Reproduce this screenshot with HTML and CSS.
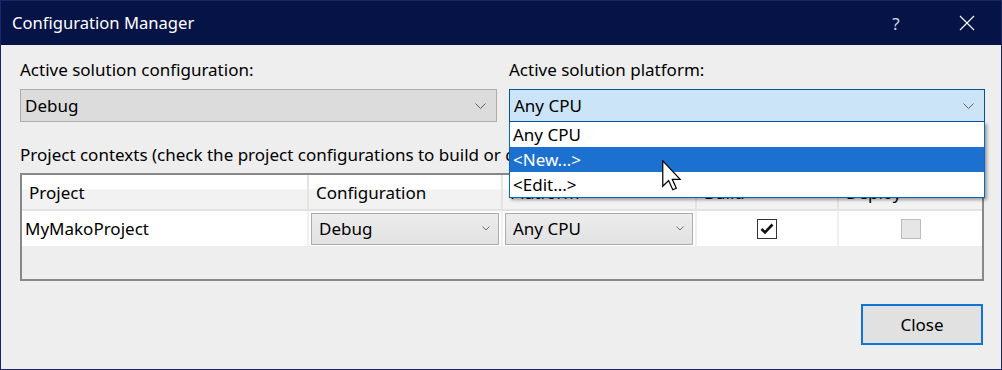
FILE: index.html
```html
<!DOCTYPE html>
<html lang="en">
<head>
    <meta charset="UTF-8">
    <title>Configuration Manager</title>
    <link rel="stylesheet" href="styles.css">
</head>
<body>
    <div class="window">
        <div class="titlebar">
            <span class="title">Configuration Manager</span>
            <span class="title-btn help">?</span>
            <span class="title-btn close-x">
                <svg width="16" height="16" viewBox="0 0 16 16"><path d="M1 1 L15 15 M15 1 L1 15" stroke="#fff" stroke-width="1.1" fill="none"/></svg>
            </span>
        </div>
        <div class="content">
            <div class="top-row">
                <div class="field">
                    <label>Active solution configuration:</label>
                    <div class="combo">
                        <span>Debug</span>
                        <svg class="chevron" width="11" height="6" viewBox="0 0 11 6"><path d="M0.5 0.5 L5.5 5.5 L10.5 0.5" stroke="#606060" fill="none"/></svg>
                    </div>
                </div>
                <div class="field platform-field">
                    <label>Active solution platform:</label>
                    <div class="combo combo-open">
                        <span>Any CPU</span>
                        <svg class="chevron" width="11" height="6" viewBox="0 0 11 6"><path d="M0.5 0.5 L5.5 5.5 L10.5 0.5" stroke="#606060" fill="none"/></svg>
                    </div>
                    <ul class="dropdown">
                        <li>Any CPU</li>
                        <li class="selected">&lt;New...&gt;</li>
                        <li>&lt;Edit...&gt;</li>
                    </ul>
                </div>
            </div>

            <div class="contexts-label">Project contexts (check the project configurations to build or deploy):</div>

            <div class="grid">
                <div class="grid-row header">
                    <div class="cell c-project">Project</div>
                    <div class="cell c-config">Configuration</div>
                    <div class="cell c-platform">Platform</div>
                    <div class="cell c-build">Build</div>
                    <div class="cell c-deploy">Deploy</div>
                </div>
                <div class="grid-row">
                    <div class="cell c-project">MyMakoProject</div>
                    <div class="cell c-config">
                        <div class="small-combo">
                            <span>Debug</span>
                            <svg width="8" height="5" viewBox="0 0 8 5"><path d="M0.5 0.5 L4 4 L7.5 0.5" stroke="#707070" fill="none"/></svg>
                        </div>
                    </div>
                    <div class="cell c-platform">
                        <div class="small-combo">
                            <span>Any CPU</span>
                            <svg width="8" height="5" viewBox="0 0 8 5"><path d="M0.5 0.5 L4 4 L7.5 0.5" stroke="#707070" fill="none"/></svg>
                        </div>
                    </div>
                    <div class="cell c-build">
                        <span class="checkbox">
                            <svg width="14" height="12" viewBox="0 0 14 12"><path d="M1.5 6 L5 9.5 L12.5 1.5" stroke="#111" stroke-width="2.6" fill="none"/></svg>
                        </span>
                    </div>
                    <div class="cell c-deploy">
                        <span class="checkbox disabled"></span>
                    </div>
                </div>
            </div>

            <div class="footer">
                <button class="btn">Close</button>
            </div>
        </div>

        <svg class="cursor" width="20" height="31" viewBox="0 0 13 20">
            <path d="M0.5 0.5 L0.5 17 L4.3 13.3 L7 19.3 L9.3 18.3 L6.7 12.5 L11.8 12.5 Z" fill="#fff" stroke="#000" stroke-width="0.8" stroke-linejoin="miter"/>
        </svg>
    </div>
</body>
</html>
```

FILE: styles.css
```css
html, body {
    margin: 0;
    padding: 0;
    background: #eeeeee;
}
body {
    font-family: 'Noto Sans', 'Open Sans', sans-serif;
    font-size: 17px;
    color: #000;
}
.window {
    position: relative;
    width: 1002px;
    height: 370px;
    box-sizing: border-box;
    border: 1px solid #1d2566;
    background-color: #eeeeee;
    overflow: hidden;
}
.titlebar {
    display: flex;
    align-items: center;
    height: 44px;
    background-color: #061347;
    color: #fff;
    padding: 0 0 0 11px;
}
.title {
    flex: 1;
    font-size: 16.6px;
    margin-top: -1px;
}
.title-btn {
    display: flex;
    align-items: center;
    justify-content: center;
    color: #d8d8e8;
}
.help {
    width: 16px;
    margin-right: 55px;
    font-size: 17px;
}
.close-x {
    width: 16px;
    margin-right: 26px;
}
.content {
    padding: 14px 17px 0 19px;
}
.top-row {
    display: grid;
    grid-template-columns: 477px 476px;
    column-gap: 12px;
}
.field {
    position: relative;
}
.field label {
    display: block;
    line-height: 22px;
    margin-bottom: 8px;
}
.combo {
    display: flex;
    align-items: center;
    height: 31px;
    border: 1px solid #adadad;
    background-color: #dcdcdc;
    padding: 0 10px 0 4px;
}
.combo span {
    flex: 1;
}
.combo-open {
    background-color: #cce4f7;
    border-color: #005499;
}
.chevron {
    margin-top: 1px;
}
.dropdown {
    position: absolute;
    top: 63px;
    left: 0;
    right: 0;
    margin: 0;
    padding: 0;
    list-style: none;
    background-color: #fff;
    border: 1px solid #0a64c2;
    border-top: none;
    box-shadow: 2px 2px 3px rgba(0, 0, 0, 0.35);
    z-index: 5;
}
.dropdown li {
    height: 25px;
    line-height: 25px;
    padding-left: 3px;
}
.dropdown li.selected {
    background-color: #1c71d0;
    color: #fff;
}
.contexts-label {
    margin-top: 22px;
    line-height: 22px;
    height: 29px;
}
.grid {
    height: 104px;
    border: 2px solid #888;
    background-color: #eeeeee;
}
.grid-row {
    display: flex;
    height: 35px;
    background-color: #fff;
}
.grid-row.header {
    height: 34px;
    background: linear-gradient(to bottom, #ffffff 0%, #ffffff 40%, #f2f2f2 45%, #f2f2f2 100%);
    border-bottom: 2px solid #e2e2e2;
}
.cell {
    display: flex;
    align-items: center;
    box-sizing: border-box;
    border-right: 2px solid #f0f0f0;
}
.header .cell {
    border-right: 2px solid #e4e4e4;
    padding-left: 7px;
}
.c-project {
    width: 287px;
    padding-left: 3px;
}
.c-config {
    width: 194px;
    padding-left: 2px;
}
.c-platform {
    width: 194px;
    padding-left: 2px;
}
.c-build {
    width: 142px;
    justify-content: center;
}
.c-deploy {
    flex: 1;
    justify-content: center;
    border-right: none;
}
.header .c-build,
.header .c-deploy {
    justify-content: flex-start;
}
.header .c-deploy {
    border-right: none;
}
.small-combo {
    display: flex;
    align-items: center;
    width: 188px;
    height: 32px;
    box-sizing: border-box;
    border: 1px solid #acacac;
    background: linear-gradient(to bottom, #ececec, #e2e2e2);
    padding: 0 8px 0 7px;
}
.small-combo span {
    flex: 1;
}
.checkbox {
    display: flex;
    align-items: center;
    justify-content: center;
    width: 20px;
    height: 20px;
    box-sizing: border-box;
    border: 1px solid #333;
    background-color: #fff;
}
.checkbox.disabled {
    border-color: #bcbcbc;
    background-color: #e6e6e6;
}
.footer {
    display: flex;
    justify-content: flex-end;
    padding: 23px 1px 0 0;
}
.btn {
    width: 122px;
    height: 41px;
    font-family: inherit;
    font-size: 17px;
    color: #000;
    background-color: #e1e1e1;
    border: 2px solid #0f74d3;
    padding: 0;
}
.cursor {
    position: absolute;
    left: 661px;
    top: 159px;
    z-index: 10;
}
```
